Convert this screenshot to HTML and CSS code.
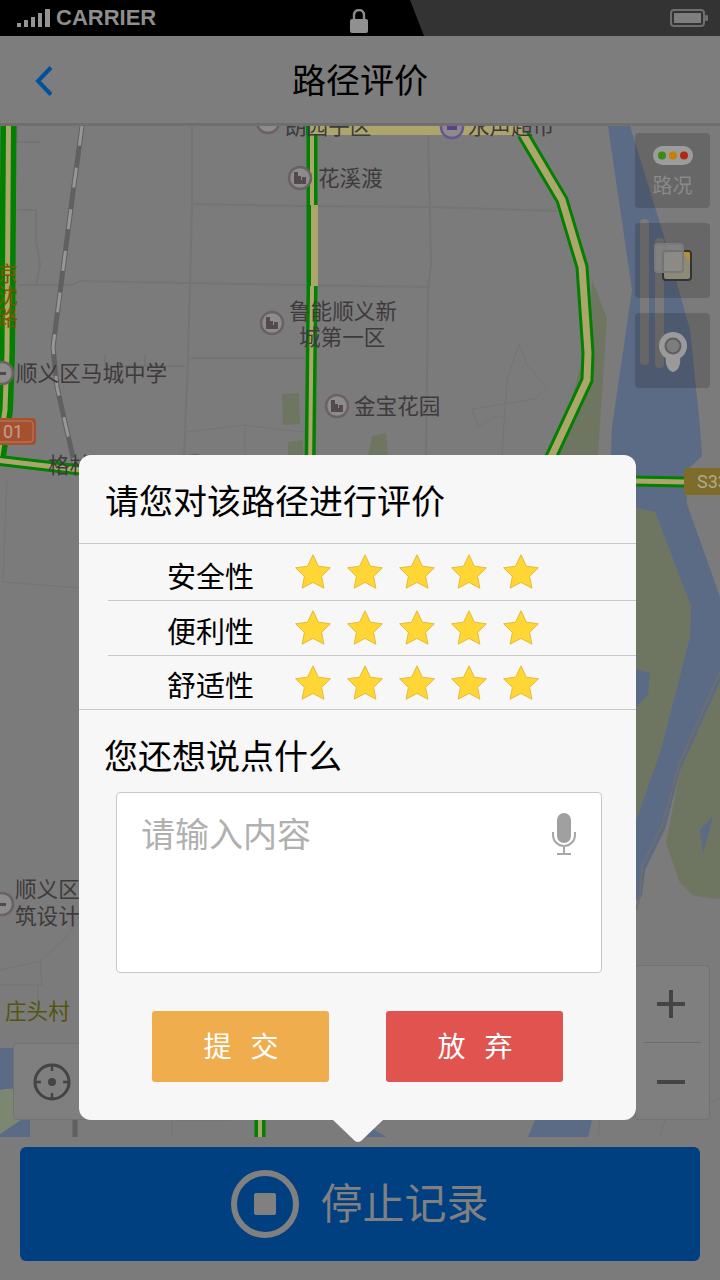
FILE: index.html
```html
<!DOCTYPE html>
<html lang="zh-CN">

<head>
    <meta charset="UTF-8" />
    <meta name="viewport" content="width=device-width, initial-scale=1.0" />
    <title>路径评价</title>
    <link rel="stylesheet" href="styles.css">
</head>

<body>
    <!-- 星星 -->
    <svg class="defs" width="0" height="0">
        <symbol id="star" viewBox="0 0 36 35">
            <polygon points="18,.8 23.4,12.2 35.4,13.8 26.6,22.4 28.9,34.2 18,28.4 7.1,34.2 9.4,22.4 .6,13.8 12.6,12.2" fill="#ffd633" stroke="#e3bb3a" stroke-width="1" />
        </symbol>
    </svg>

    <div class="page">
        <!-- 状态栏 -->
        <div class="status">
            <div class="status-left">
                <svg class="signal" width="33" height="18" viewBox="0 0 33 18">
                    <rect x="0" y="14" width="4" height="4" fill="#949494" />
                    <rect x="7" y="11" width="4" height="7" fill="#949494" />
                    <rect x="14" y="8" width="4" height="10" fill="#949494" />
                    <rect x="21" y="4" width="4" height="14" fill="#949494" />
                    <rect x="28" y="0" width="5" height="18" fill="#949494" />
                </svg>
                <span class="carrier">CARRIER</span>
                <svg class="lock" width="18" height="24" viewBox="0 0 18 24">
                    <path d="M4 11V6a5 5 0 0 1 10 0v5" fill="none" stroke="#8c8c8c" stroke-width="2.4" />
                    <rect x="0" y="10" width="18" height="14" rx="2" fill="#909090" />
                </svg>
            </div>
            <div class="status-right">
                <svg width="39" height="18" viewBox="0 0 39 18">
                    <rect x="1" y="1" width="33" height="16" rx="3" fill="none" stroke="#6e6e6e" stroke-width="2" />
                    <rect x="4" y="4" width="27" height="10" fill="#7e7e7e" />
                    <rect x="35" y="6" width="3" height="6" rx="1" fill="#6e6e6e" />
                </svg>
            </div>
        </div>

        <!-- 标题栏 -->
        <div class="header">
            <svg class="back" width="18" height="30" viewBox="0 0 18 30">
                <path d="M16 1.5L3 15l13 13.5" fill="none" stroke="#00509e" stroke-width="4" />
            </svg>
            <h1 class="header-title">路径评价</h1>
        </div>

        <!-- 地图 -->
        <div class="map">
            <svg class="map-canvas" width="720" height="1011" viewBox="0 126 720 1011">
                <!-- 绿地 -->
                <g fill="#6e7662">
                    <polygon points="592,280 607,318 598,455 557,455 590,330" />
                    <polygon points="598,455 636,508 655,512 691,606 690,637 660,753 636,820 560,820 560,455" />
                    <polygon points="720,682 680,771 666,843 680,883 693,896 720,899" />
                    <polygon points="282,394 299,393 300,424 283,425" />
                    <polygon points="288,442 303,440 303,456 288,456" />
                    <polygon points="372,436 386,433 388,456 368,456" />
                </g>
                <!-- 水面 -->
                <g fill="#5b6b85">
                    <polygon points="608,126 630,126 662,230 690,330 700,427 702,456 685,472 687,504 720,597 720,682 680,771 665,829 645,870 642,896 600,930 600,820 636,820 660,753 690,637 691,606 655,512 636,508 610,480 612,427 632,290" />
                    <polygon points="636,669 650,673 648,695 636,707" />
                    <polygon points="713,816 703,854 700,830" />
                    <polygon points="528,1137 535,1120 592,1120 588,1137" />
                    <polygon points="355,1137 367,1125 386,1137" />
                    <polygon points="0,1048 30,1048 30,1137 0,1137" />
                </g>
                <path d="M0 1090q18-4 26 4l4 20-30 20z" fill="#7c8670" />
                <!-- 河中沙洲 -->
                <g fill="#7a7a7a">
                    <rect x="640" y="219" width="9" height="146" rx="4" />
                    <rect x="655" y="238" width="9" height="130" rx="4" />
                </g>
                <!-- 小路 -->
                <g fill="none" stroke="#747474" stroke-width="2">
                    <polyline points="192,126 192,205 190,285 188,358 184,456" />
                    <polyline points="18,285 72,285 80,281 300,285 430,287" />
                    <polyline points="193,204 300,206 430,207 557,211" />
                    <polyline points="428,126 431,265 428,287 426,456" />
                    <polyline points="190,358 305,358" />
                    <polyline points="105,355 105,366 185,366" />
                    <polyline points="145,355 145,366" />
                    <polyline points="17,126 17,142 40,142" />
                    <polyline points="17,210 36,210 36,240 40,265 36,285" />
                    <polyline points="519,344 507,380 505,407 502,456" stroke-width="1" />
                    <polyline points="519,344 527,365 547,387 535,399 472,409 478,428 493,417 505,417" stroke-width="1" />
                    <polyline points="186,432 245,425 265,428 305,432" stroke-width="1" />
                    <polyline points="245,425 245,456" stroke-width="1" />
                    <polyline points="7,479 3,582 80,588" stroke-width="1" />
                    <polyline points="80,914 67,937 40,961 0,970" stroke-width="1" />
                    <polyline points="40,961 42,985 0,985" stroke-width="1" />
                    <polyline points="38,985 38,1010" stroke-width="1" />
                    <polyline points="172,1137 172,1120 230,1120" stroke-width="1" />
                    <polyline points="660,1137 665,1120 720,1098" stroke-width="1" />
                    <polyline points="598,1137 600,1120" stroke-width="1" />
                    <polyline points="720,672 680,762 662,826 642,866 640,896 636,910" stroke="#6e6e6e" />
                </g>
                <!-- 铁路 -->
                <polyline class="rail-base" points="82,126 72,200 60,293 53,347 57,387 72,453 76,470" />
                <polyline class="rail-dash" points="82,126 72,200 60,293 53,347 57,387 72,453 76,470" />
                <polyline class="rail-base" points="75,1137 75,1120" />
                <!-- 主路 -->
                <g fill="none" stroke="#018001" stroke-width="13">
                    <polyline points="8.5,126 7,353 5,410 -2,456" stroke-width="16" />
                    <polyline points="-4,460 80,470 684,482" stroke-width="11" />
                    <polyline points="312,134 312,290 310,470" stroke-width="11" />
                    <polyline points="523,134 562,200 582,267 588,353 587,380 553,453 530,500" />
                    <polyline points="260,1120 260,1137" stroke-width="11" />
                </g>
                <g fill="none" stroke="#aca66c" stroke-width="7">
                    <polyline points="8.5,126 7,353 5,410 -2,456" stroke-width="5" />
                    <polyline points="-4,460 80,470 684,482" stroke-width="5" />
                    <polyline points="312,134 312,290 310,470" stroke-width="4" />
                    <polyline points="523,134 562,200 582,267 588,353 587,380 553,453 530,500" />
                    <polyline points="260,1120 260,1137" stroke-width="4" />
                </g>
                <rect x="309" y="126" width="214" height="9" fill="#aca66c" />
                <rect x="306" y="126" width="3" height="9" fill="#018001" />
                <rect x="309" y="205" width="2" height="81" fill="#018001" />
                <rect x="311" y="205" width="7" height="81" fill="#aca66c" />
                <!-- 标牌 -->
                <rect x="-8" y="418" width="44" height="27" rx="4" fill="#a5502f" />
                <rect x="-6" y="421" width="39" height="21" rx="3" fill="none" stroke="#b87e64" stroke-width="1" />
                <text class="shield-text" x="3" y="438">01</text>
                <rect x="684" y="468" width="50" height="27" rx="4" fill="#7d6c2a" />
                <text class="shield-text shield-s" x="697" y="488">S33</text>
                <!-- 地点图标 -->
                <g class="poi">
                    <circle cx="268" cy="122" r="11" />
                    <circle cx="300" cy="178" r="11" />
                    <circle cx="272" cy="323" r="11" />
                    <circle cx="337" cy="406" r="11" />
                    <circle cx="2" cy="373" r="11" />
                    <circle cx="195" cy="466" r="11" />
                    <circle cx="2" cy="904" r="11" />
                    <circle class="poi-shop" cx="452" cy="127" r="11" />
                </g>
                <g fill="#544a4e">
                    <path d="M294 184v-12h4v4h3v4h1v-3h4v7z" />
                    <path d="M266 329v-12h4v4h3v4h1v-3h4v7z" />
                    <path d="M331 412v-12h4v4h3v4h1v-3h4v7z" />
                    <rect x="-3" y="372" width="9" height="3" />
                    <rect x="-3" y="903" width="9" height="3" />
                    <rect x="447" y="123" width="10" height="7" fill="#5d3f8e" />
                </g>
                <!-- 地名 -->
                <g class="label">
                    <text x="285" y="134">朗园子区</text>
                    <text x="468" y="134">永声超市</text>
                    <text x="318" y="186">花溪渡</text>
                    <text x="289" y="319">鲁能顺义新</text>
                    <text x="299" y="345">城第一区</text>
                    <text x="16" y="381">顺义区马城中学</text>
                    <text x="354" y="414">金宝花园</text>
                    <text x="48" y="473">格林</text>
                    <text x="15" y="897">顺义区</text>
                    <text x="15" y="924">筑设计</text>
                    <text class="label-village" x="5" y="1019">庄头村</text>
                    <text class="label-road" x="-3" y="281">京</text>
                    <text class="label-road" x="-3" y="303">沈</text>
                    <text class="label-road" x="-3" y="325">路</text>
                </g>
            </svg>

            <!-- 地图按钮 -->
            <div class="map-tools">
                <div class="tool">
                    <svg width="40" height="19" viewBox="0 0 40 19">
                        <rect width="40" height="19" rx="9.5" fill="#9c9c9c" />
                        <circle cx="9" cy="9.5" r="4" fill="#3d8a10" />
                        <circle cx="20" cy="9.5" r="4" fill="#c88000" />
                        <circle cx="31" cy="9.5" r="4" fill="#b02a10" />
                    </svg>
                    <span class="tool-text">路况</span>
                </div>
                <div class="tool">
                    <svg width="38" height="38" viewBox="0 0 38 38">
                        <rect x="9" y="8" width="28" height="29" rx="3" fill="#8f8a78" stroke="#333" stroke-width="2" />
                        <path d="M28 9h6a2 2 0 0 1 2 2v8z" fill="#b98c3c" />
                        <rect x="1" y="1" width="28" height="28" rx="3" fill="#8a8a8a" fill-opacity=".75" stroke="#7a7a7a" stroke-width="2" />
                    </svg>
                </div>
                <div class="tool">
                    <svg width="30" height="42" viewBox="0 0 30 42">
                        <circle cx="15" cy="15" r="14" fill="#9a9a9a" />
                        <circle cx="15" cy="15" r="7.5" fill="#7d7d7d" stroke="#5e5e5e" stroke-width="2" />
                        <path d="M8 27h14c1 4-1 13-7 14-6-1-8-10-7-14z" fill="#9a9a9a" />
                    </svg>
                </div>
            </div>

            <div class="zoom-box">
                <div class="zoom-cell">
                    <svg width="30" height="30" viewBox="0 0 30 30">
                        <path d="M1 15h28M15 1v28" stroke="#444" stroke-width="4" />
                    </svg>
                </div>
                <div class="zoom-cell">
                    <svg width="30" height="4" viewBox="0 0 30 4">
                        <path d="M1 2h28" stroke="#444" stroke-width="4" />
                    </svg>
                </div>
            </div>

            <div class="locate">
                <svg width="38" height="38" viewBox="0 0 38 38">
                    <circle cx="19" cy="19" r="17" fill="none" stroke="#444" stroke-width="3" />
                    <circle cx="19" cy="19" r="4" fill="#444" />
                    <path d="M19 2v6M19 30v6M2 19h6M30 19h6" stroke="#444" stroke-width="2.5" />
                </svg>
            </div>
        </div>

        <!-- 底部按钮 -->
        <div class="bottom">
            <div class="stop-btn">
                <svg width="68" height="68" viewBox="0 0 68 68">
                    <circle cx="34" cy="34" r="31" fill="none" stroke="#808080" stroke-width="6" />
                    <rect x="23" y="23" width="22" height="22" rx="2" fill="#808080" />
                </svg>
                <span class="stop-text">停止记录</span>
            </div>
        </div>

        <!-- 评价弹窗 -->
        <div class="dialog">
            <div class="dialog-title">请您对该路径进行评价</div>
            <div class="rate-list">
                <div class="rate-row">
                    <span class="rate-name">安全性</span>
                    <div class="stars">
                        <svg class="star"><use href="#star" /></svg>
                        <svg class="star"><use href="#star" /></svg>
                        <svg class="star"><use href="#star" /></svg>
                        <svg class="star"><use href="#star" /></svg>
                        <svg class="star"><use href="#star" /></svg>
                    </div>
                </div>
                <div class="rate-row">
                    <span class="rate-name">便利性</span>
                    <div class="stars">
                        <svg class="star"><use href="#star" /></svg>
                        <svg class="star"><use href="#star" /></svg>
                        <svg class="star"><use href="#star" /></svg>
                        <svg class="star"><use href="#star" /></svg>
                        <svg class="star"><use href="#star" /></svg>
                    </div>
                </div>
                <div class="rate-row">
                    <span class="rate-name">舒适性</span>
                    <div class="stars">
                        <svg class="star"><use href="#star" /></svg>
                        <svg class="star"><use href="#star" /></svg>
                        <svg class="star"><use href="#star" /></svg>
                        <svg class="star"><use href="#star" /></svg>
                        <svg class="star"><use href="#star" /></svg>
                    </div>
                </div>
            </div>
            <div class="more-title">您还想说点什么</div>
            <div class="input-box">
                <span class="placeholder">请输入内容</span>
                <svg width="24" height="42" viewBox="0 0 24 42">
                    <rect x="5" y="0" width="14" height="30" rx="7" fill="#a0a0a0" />
                    <path d="M1 19v3a11 11 0 0 0 22 0v-3M12 33v8M5 41h14" fill="none" stroke="#a8a8a8" stroke-width="2" />
                </svg>
            </div>
            <div class="dialog-btns">
                <a href="javascript:;" class="btn btn-submit">提 交</a>
                <a href="javascript:;" class="btn btn-cancel">放 弃</a>
            </div>
            <!-- 小三角 -->
            <svg class="dialog-arrow" width="50" height="23" viewBox="0 0 50 23">
                <path d="M0 0h50L28 21q-3 2-6 0z" fill="#f7f7f7" />
            </svg>
        </div>
    </div>
</body>

</html>
```

FILE: styles.css
```css
* {
    margin: 0;
    padding: 0;
    box-sizing: border-box;
}

body {
    font-family: Roboto, "Noto Sans CJK SC", sans-serif;
}

a {
    text-decoration: none;
}

.defs {
    position: absolute;
}

.page {
    position: relative;
    display: flex;
    flex-direction: column;
    overflow: hidden;
    width: 720px;
    height: 1280px;
    background-color: #7b7b7b;
}

/* 状态栏 */
.status {
    display: flex;
    flex: none;
    height: 36px;
    background-color: #000;
}

.status-left {
    display: flex;
    align-items: center;
    width: 410px;
    padding-left: 17px;
}

.signal {
    margin-right: 6px;
}

.carrier {
    width: 294px;
    font-family: "Liberation Sans", sans-serif;
    font-size: 22px;
    font-weight: bold;
    color: #8e8e8e;
}

.lock {
    margin-top: 5px;
}

.status-right {
    display: flex;
    align-items: center;
    justify-content: flex-end;
    flex: 1;
    padding-right: 11px;
    background-color: #333;
    clip-path: polygon(0 0, 100% 0, 100% 100%, 14px 100%);
}

/* 标题栏 */
.header {
    position: relative;
    display: flex;
    align-items: center;
    justify-content: center;
    flex: none;
    height: 90px;
    padding-bottom: 2px;
    background-color: #7d7d7d;
    border-bottom: 3px solid #6f6f6f;
}

.back {
    position: absolute;
    left: 35px;
    top: 30px;
}

.header-title {
    font-size: 34px;
    font-weight: 400;
    color: #000;
}

/* 地图 */
.map {
    position: relative;
    flex: 1;
    overflow: hidden;
    background-color: #7b7b7b;
}

.map-canvas {
    display: block;
}

.rail-base {
    fill: none;
    stroke: #606060;
    stroke-width: 5;
}

.rail-dash {
    fill: none;
    stroke: #979797;
    stroke-width: 3;
    stroke-dasharray: 20 22;
}

.shield-text {
    font-size: 18px;
    fill: #c0a090;
}

.shield-s {
    fill: #b0a890;
}

.poi circle {
    fill: #8c8c8c;
    stroke: #6b6063;
    stroke-width: 2.5;
}

.poi .poi-shop {
    stroke: #6a5590;
}

.label text {
    font-size: 21.6px;
    fill: #3e3a3b;
}

.label .label-village {
    fill: #55540f;
}

.label .label-road {
    font-size: 21px;
    fill: #7a5500;
}

.map-tools {
    position: absolute;
    top: 7px;
    left: 635px;
    display: flex;
    flex-direction: column;
    gap: 15px;
}

.tool {
    display: flex;
    flex-direction: column;
    align-items: center;
    justify-content: center;
    gap: 10px;
    width: 75px;
    height: 75px;
    padding-top: 2px;
    background-color: rgba(0, 0, 0, 0.16);
    border-radius: 4px;
}

.tool-text {
    font-size: 20px;
    line-height: 22px;
    color: #8a8a8a;
}

.zoom-box {
    position: absolute;
    left: 635px;
    top: 839px;
    width: 75px;
    height: 155px;
    background-color: #7f7f7f;
    border: 1px solid #727272;
    border-radius: 4px;
}

.zoom-cell {
    display: flex;
    align-items: center;
    justify-content: center;
    height: 77px;
    padding-right: 3px;
}

.zoom-cell:first-child {
    margin: 0 8px;
    border-bottom: 1px solid #6c6c6c;
}

.locate {
    position: absolute;
    left: 13px;
    top: 917px;
    display: flex;
    align-items: center;
    width: 80px;
    height: 77px;
    padding-left: 19px;
    background-color: #7f7f7f;
    border: 1px solid #727272;
    border-radius: 4px;
}

/* 底部按钮 */
.bottom {
    flex: none;
    height: 143px;
    padding: 10px 20px 19px;
    background-color: #7b7b7c;
}

.stop-btn {
    display: flex;
    align-items: center;
    justify-content: center;
    gap: 21px;
    height: 114px;
    background-color: #003f80;
    border-radius: 6px;
}

.stop-text {
    padding-bottom: 7px;
    font-size: 42px;
    color: #808080;
}

/* 弹窗 */
.dialog {
    position: absolute;
    left: 79px;
    top: 455px;
    width: 557px;
    height: 665px;
    background-color: #f7f7f7;
    border-radius: 12px;
}

.dialog-title {
    height: 88px;
    padding: 26px 0 0 26px;
    font-size: 34px;
    line-height: 42px;
    color: #000;
}

.rate-list {
    border-top: 1px solid #c8c8c8;
    border-bottom: 1px solid #c8c8c8;
}

.rate-row {
    display: flex;
    align-items: center;
    margin-left: 29px;
    height: 57px;
    border-bottom: 1px solid #c8c8c8;
}

.rate-row:nth-child(2) {
    height: 55px;
}

.rate-row:last-child {
    height: 53px;
    border-bottom: none;
}

.rate-name {
    width: 187px;
    padding: 9px 0 0 59px;
    font-size: 29px;
    line-height: 40px;
    color: #000;
}

.rate-row:first-child .rate-name {
    padding-top: 11px;
}

.stars {
    display: flex;
    gap: 16px;
    margin-bottom: 1px;
}

.star {
    width: 36px;
    height: 35px;
}

.more-title {
    padding: 27px 0 0 25px;
    font-size: 34px;
    line-height: 40px;
    color: #000;
}

.input-box {
    display: flex;
    justify-content: space-between;
    width: 486px;
    height: 181px;
    margin: 15px 0 0 37px;
    padding: 20px 25px 20px 24px;
    background-color: #fff;
    border: 1px solid #c8c8c8;
    border-radius: 4px;
}

.placeholder {
    padding-top: 1px;
    font-size: 34px;
    line-height: 42px;
    color: #b0b0b0;
}

.dialog-btns {
    display: flex;
    gap: 57px;
    margin: 38px 0 0 73px;
}

.btn {
    width: 177px;
    height: 71px;
    padding: 1px 0 0 7px;
    font-size: 28px;
    line-height: 71px;
    letter-spacing: 6px;
    text-align: center;
    color: #fff;
    border-radius: 3px;
}

.btn-submit {
    background-color: #f0ad4e;
}

.btn-cancel {
    background-color: #e0534f;
}

.dialog-arrow {
    position: absolute;
    left: 254px;
    top: 665px;
}
```
